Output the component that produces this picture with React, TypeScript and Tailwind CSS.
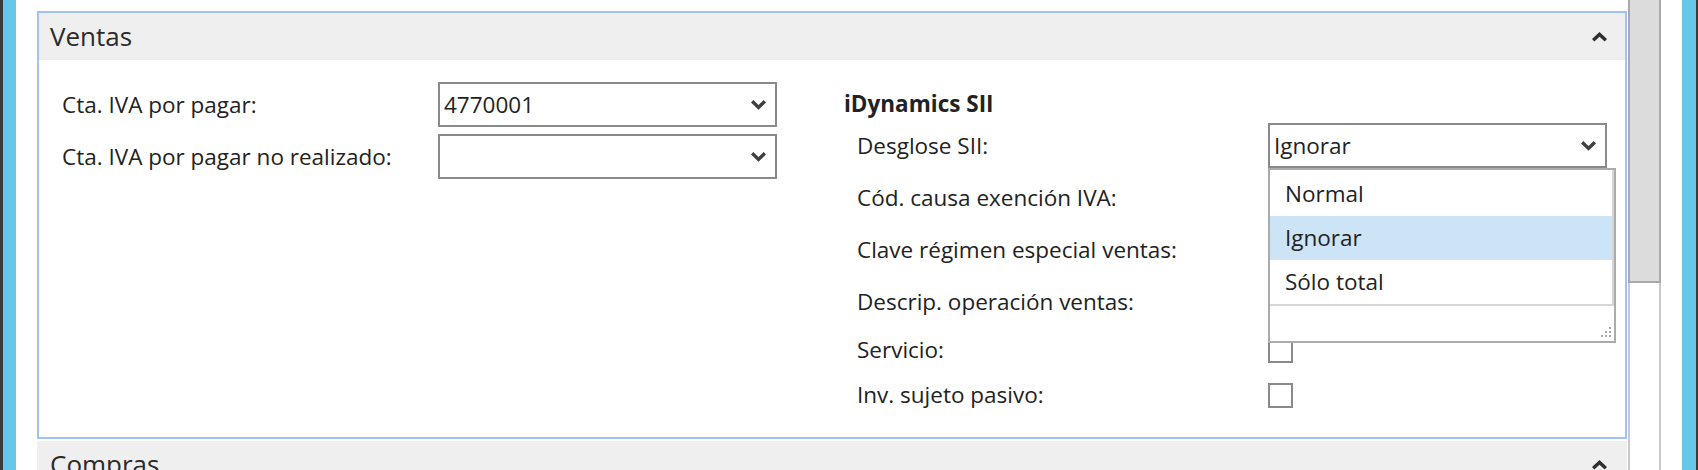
import React from 'react'

const font = "font-['Open_Sans',sans-serif]"

// Small bold chevrons used by the headers and the combo boxes
const CaretUp = () => (
  <svg width="15" height="10" viewBox="0 0 15 10">
    <path d="M0 7 L7.5 0 L15 7 L12.7 9.6 L7.5 4.7 L2.3 9.6 Z" fill="#2f2f2f" />
  </svg>
)

const CaretDown = () => (
  <svg width="15" height="10" viewBox="0 0 15 10">
    <path d="M0 2.6 L2.3 0 L7.5 4.9 L12.7 0 L15 2.6 L7.5 9.8 Z" fill="#404040" />
  </svg>
)

const ResizeGrip = () => (
  <svg width="14" height="14" viewBox="0 0 14 14">
    {[
      [11, 2],
      [7, 6],
      [11, 6],
      [3, 10],
      [7, 10],
      [11, 10],
    ].map(([x, y], i) => (
      <rect key={i} x={x} y={y} width="2" height="2" fill="#a8a8a8" />
    ))}
  </svg>
)

const Combo = ({ value }: { value?: string }) => (
  <div className="w-[339px] h-[45px] border-2 border-[#8a8a8a] bg-white flex items-center justify-between pl-[4px] pr-[9px]">
    <span className="text-[#222222]">{value}</span>
    <CaretDown />
  </div>
)

const Checkbox = () => (
  <div className="w-[25px] h-[25px] border-2 border-[#8a8a8a] bg-white" />
)

const leftRows = [
  { label: 'Cta. IVA por pagar:', value: '4770001' },
  { label: 'Cta. IVA por pagar no realizado:', value: '' },
]

const options = ['Normal', 'Ignorar', 'Sólo total']

export default function App() {
  return (
    <div className={`${font} w-[1698px] h-[470px] overflow-hidden flex bg-white text-[22.5px] text-[#222222]`}>
      <div className="w-[3px] bg-[#3a3a3a]" />
      <div className="w-[13px] bg-[#66c8e8]" />

      {/* page content */}
      <div className="w-[1612px] pl-[21px] pt-[11px]">
        {/* Ventas */}
        <div className="w-[1590px] h-[428px] border-2 border-[#9fc3f7] flex flex-col">
          <div className="h-[47px] bg-[#efefef] flex items-center justify-between pl-[11px] pr-[18px]">
            <span className="text-[26px] text-[#2b2b2b]">Ventas</span>
            <CaretUp />
          </div>

          <div className="flex-1 flex pl-[23px]">
            {/* left column */}
            <div className="w-[782px] pt-[22px] flex flex-col gap-[7px]">
              {leftRows.map((r) => (
                <div key={r.label} className="flex items-center h-[45px]">
                  <span className="w-[376px]">{r.label}</span>
                  <Combo value={r.value} />
                </div>
              ))}
            </div>

            {/* right column */}
            <div className="pt-[29px] flex flex-col">
              <div className="h-[30px] flex items-center font-bold">iDynamics SII</div>
              <div className="mt-[4px] flex flex-col gap-[7px] pl-[13px]">
                <div className="relative flex items-center h-[45px]">
                  <span className="w-[411px]">Desglose SII:</span>
                  <Combo value="Ignorar" />

                  {/* open list */}
                  <div className="absolute z-10 left-[411px] top-[45px] w-[348px] h-[175px] border-2 border-[#ababab] bg-white flex flex-col">
                    <div className="pt-[2px] border-r-2 border-b-2 border-[#d6d6d6]">
                      {options.map((o) => (
                        <div
                          key={o}
                          className={`h-[44px] flex items-center pl-[15px] ${o === 'Ignorar' ? 'bg-[#cde4f6]' : ''}`}
                        >
                          {o}
                        </div>
                      ))}
                    </div>
                    <div className="flex-1 flex items-end justify-end pr-[2px] pb-[2px]">
                      <ResizeGrip />
                    </div>
                  </div>
                </div>
                {['Cód. causa exención IVA:', 'Clave régimen especial ventas:', 'Descrip. operación ventas:'].map((l) => (
                  <div key={l} className="flex items-center h-[45px]">
                    <span className="w-[411px]">{l}</span>
                    <Combo />
                  </div>
                ))}
                {['Servicio:', 'Inv. sujeto pasivo:'].map((l) => (
                  <div key={l} className="flex items-center h-[38px]">
                    <span className="w-[411px]">{l}</span>
                    <Checkbox />
                  </div>
                ))}
              </div>
            </div>
          </div>
        </div>

        {/* Compras (collapsed, cut off by the window) */}
        <div className="mt-[2px] w-[1590px] h-[47px] bg-[#efefef] flex items-center justify-between pl-[13px] pr-[20px]">
          <span className="text-[26px] text-[#2b2b2b]">Compras</span>
          <CaretUp />
        </div>
      </div>

      {/* scrollbar */}
      <div className="w-[33px] flex flex-col">
        <div className="h-[283px] bg-[#dcdcdc] border-x-2 border-b-2 border-[#a9a9a9]" />
        <div className="flex-1 border-x-2 border-[#c9c9c9]" />
      </div>

      <div className="w-[21px] bg-white" />
      <div className="w-[14px] bg-[#66c8e8]" />
      <div className="w-[2px] bg-[#3a3a3a]" />
    </div>
  )
}
